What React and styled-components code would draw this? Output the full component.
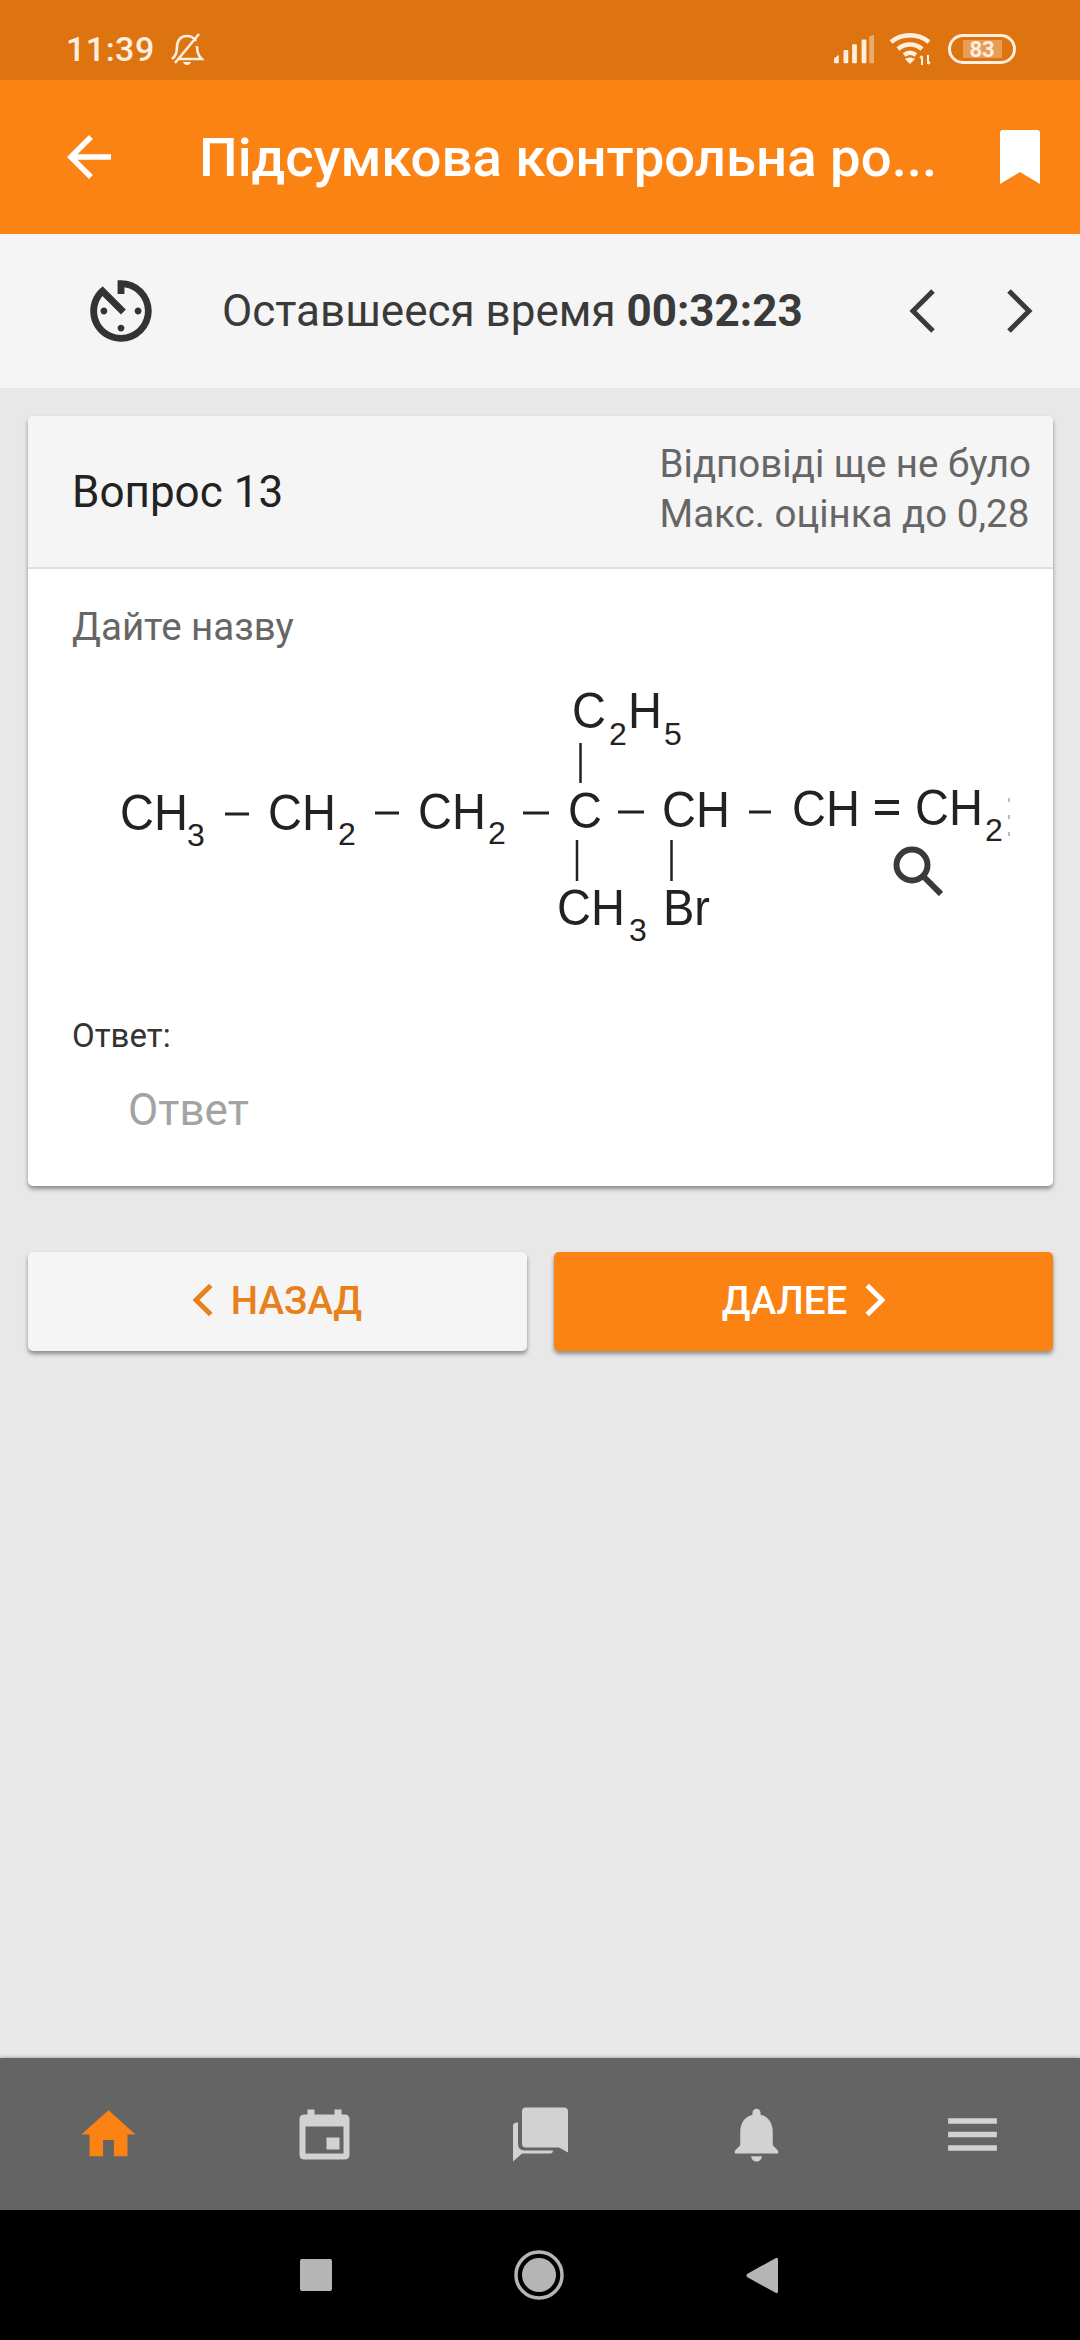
import styled, { createGlobalStyle } from "styled-components";
import { MdArrowBack, MdAvTimer, MdHome, MdNotifications, MdMenu } from "react-icons/md";

const GlobalStyle = createGlobalStyle`
    html, body {
        margin: 0;
        padding: 0;
        background: #e8e8e8;
    }
    * {
        box-sizing: border-box;
    }
`;

const Page = styled.div`
    width: 1080px;
    height: 2340px;
    display: flex;
    flex-direction: column;
    overflow: hidden;
    background: #e8e8e8;
    font-family: Roboto, "Noto Sans", sans-serif;
`;

const StatusBar = styled.div`
    height: 80px;
    flex: none;
    display: flex;
    align-items: center;
    justify-content: space-between;
    padding: 18px 64px 0 66px;
    background: #dd7410;
    color: #fdeee0;
`;

const StatusGroup = styled.div`
    display: flex;
    align-items: center;
    gap: ${props => props.$gap}px;
`;

const Clock = styled.span`
    font-size: 34px;
    font-weight: 500;
    letter-spacing: 0.5px;
`;

const Header = styled.header`
    height: 154px;
    flex: none;
    display: flex;
    align-items: center;
    background: #fb8314;
    color: #fff;
    padding: 0 40px 0 56px;
`;

const HeaderTitle = styled.h1`
    flex: 1;
    margin: 0 0 0 77px;
    font-size: 54.5px;
    font-weight: 500;
    white-space: nowrap;
`;

const TimerBar = styled.div`
    height: 154px;
    flex: none;
    display: flex;
    align-items: center;
    background: #f5f5f5;
    color: #3a3a3a;
    padding: 0 47px 0 80px;
`;

const TimerText = styled.div`
    flex: 1;
    margin-left: 60px;
    font-size: 44px;

    b {
        font-weight: 700;
    }
`;

const Pager = styled.div`
    display: flex;
    gap: 70px;
`;

const Content = styled.main`
    flex: 1;
    padding: 28px 27px 0 28px;
`;

const Card = styled.section`
    background: #fff;
    border-radius: 5px;
    box-shadow: 0 3px 4px rgba(0, 0, 0, 0.4);
    height: 770px;
`;

const CardHeader = styled.div`
    height: 153px;
    display: flex;
    align-items: center;
    justify-content: space-between;
    background: #f5f5f5;
    border-radius: 5px 5px 0 0;
    border-bottom: 2px solid #dedede;
    padding: 0 22px 0 44px;
`;

const QuestionTitle = styled.div`
    font-size: 44px;
    color: #222;
`;

const QuestionMeta = styled.div`
    margin-bottom: 6px;
    font-size: 38.5px;
    line-height: 50px;
    color: #666;
`;

const CardBody = styled.div`
    padding: 33px 44px 0;
`;

const Prompt = styled.div`
    font-size: 38.5px;
    line-height: 50px;
    color: #666;
`;

const Figure = styled.div`
    position: relative;
    width: 938px;
    height: 280px;
    margin-top: 26px;
`;

const FormulaSvg = styled.svg`
    display: block;
    font-family: "Liberation Sans", Arial, sans-serif;
    fill: #222;
`;

const ZoomIcon = styled.svg`
    position: absolute;
    left: 821px;
    top: 168px;
    color: #3a3a3a;
`;

const AnswerLabel = styled.div`
    margin-top: 58px;
    font-size: 33px;
    line-height: 40px;
    color: #333;
`;

const AnswerInput = styled.input`
    display: block;
    width: 100%;
    margin-top: 26px;
    padding: 0 0 0 56px;
    border: none;
    outline: none;
    background: transparent;
    font-family: inherit;
    font-size: 44px;
    line-height: 56px;

    &::placeholder {
        color: #a3a3a3;
        opacity: 1;
    }
`;

const Actions = styled.div`
    display: grid;
    grid-template-columns: 1fr 1fr;
    gap: 27px;
    margin-top: 66px;
`;

const ActionButton = styled.button`
    height: 99px;
    display: flex;
    align-items: center;
    justify-content: center;
    gap: 18px;
    border: none;
    border-radius: 5px;
    padding: 0 0 3px;
    background: ${props => props.$primary ? "#fb8314" : "#f5f5f5"};
    color: ${props => props.$primary ? "#fff" : "#e8801c"};
    box-shadow: 0 3px 4px rgba(0, 0, 0, 0.4);
    font-family: inherit;
    font-size: 38.5px;
    font-weight: 500;
`;

const BottomNav = styled.nav`
    height: 152px;
    flex: none;
    display: grid;
    grid-template-columns: repeat(5, 1fr);
    align-items: center;
    justify-items: center;
    background: #646464;
    box-shadow: 0 -1px 3px rgba(0, 0, 0, 0.25);
    color: #d2d2d2;
`;

const NavItem = styled.div`
    display: flex;
    color: ${props => props.$active ? "#fb8314" : "#d2d2d2"};
`;

const SystemBar = styled.div`
    height: 130px;
    flex: none;
    display: flex;
    align-items: center;
    justify-content: center;
    gap: 182px;
    background: #000;
    padding-right: 2px;
`;

const Chevron = ({ dir = "left", width = 27, height = 44, stroke = 5 }) => (
    <svg width={width} height={height} viewBox="0 0 27 44" fill="none" stroke="currentColor" strokeWidth={stroke * 27 / width} preserveAspectRatio="none">
        <path d={dir === "left" ? "M24 2 L4 22 L24 42" : "M3 2 L23 22 L3 42"} />
    </svg>
);

const BellOff = () => (
    <svg width="34" height="34" viewBox="0 0 34 34" fill="none" stroke="currentColor" strokeWidth="2.6">
        <path d="M2 27 C6 24 7 20 7 15 C7 8 11 4 17 4 C21 4 24 6 26 9" />
        <path d="M27 14 C27 20 28 24 32 27 H9" />
        <path d="M5 31 L29 2" />
        <path d="M13 30 H21 C20 34 14 34 13 30 Z" fill="currentColor" stroke="none" />
    </svg>
);

const Signal = () => (
    <svg width="40" height="30" viewBox="0 0 42 30" fill="currentColor">
        <path d="M0 25 L5 21 V30 H1 Q0 30 0 29 Z" />
        <rect x="10" y="16" width="5" height="14" rx="1" />
        <rect x="19" y="10" width="5" height="20" rx="1" />
        <rect x="29" y="5" width="5" height="25" rx="1" />
        <path d="M37 2 L42 0 V30 H37 Z" opacity="0.45" />
    </svg>
);

const Wifi = () => (
    <svg width="44" height="32" viewBox="0 0 44 32" fill="none" stroke="currentColor" strokeWidth="4.5">
        <path d="M2 9 C13 0 29 0 40 9" />
        <path d="M9 16 C16 10 26 10 33 16" />
        <path d="M15 22 C19 19 23 19 27 22" />
        <path d="M21 31 L16 26 C19 24 23 24 26 26 Z" fill="currentColor" stroke="none" />
        <path d="M33 32 V23 M33 23 L31 25 M39 22 V31 M39 31 L41 29" strokeWidth="2" />
    </svg>
);

const Battery = () => (
    <svg width="68" height="30" viewBox="0 0 68 30">
        <rect x="1.5" y="1.500" width="65" height="27" rx="13.5" fill="none" stroke="currentColor" strokeWidth="3" />
        <rect x="15" y="6" width="39" height="18" fill="currentColor" opacity="0.35" />
        <text x="34" y="23" textAnchor="middle" fontFamily="Roboto, sans-serif" fontSize="22" fontWeight="700" fill="currentColor">83</text>
    </svg>
);

const BookmarkIcon = () => (
    <svg width="40" height="54" viewBox="0 0 40 54" fill="currentColor">
        <path d="M3 0 H37 Q40 0 40 3 V54 L20 42 L0 54 V3 Q0 0 3 0 Z" />
    </svg>
);

const CalendarIcon = () => (
    <svg width="65" height="65" viewBox="-7.5 -7.5 65 65" fill="currentColor">
        <path fillRule="evenodd" d="M8 0 H15 V5 H35 V0 H42 V5 H45 Q50 5 50 10 V45 Q50 50 45 50 H5 Q0 50 0 45 V10 Q0 5 5 5 H8 Z M6 17 V44 H44 V17 Z" />
        <rect x="27" y="28" width="13" height="12" />
    </svg>
);

const ForumIcon = () => (
    <svg width="65" height="65" viewBox="-5 -5.500 65 65" fill="currentColor">
        <path d="M13 0 H51 Q55 0 55 4 V45 L46 40 H13 Q9 40 9 36 V4 Q9 0 13 0 Z" />
        <path d="M5 15 V36 Q5 43 12 43 H40 Q40 46 37 46 H9 L0 54 V18 Q0 15 5 15 Z" />
    </svg>
);

// the formula is a scanned picture in the app, the coordinates are page coordinates
const Chem = ({ x, y, children }) => (
    <text transform={`translate(${x} ${y}) scale(1 1.06)`} fontSize={47}>{children}</text>
);

const Sub = ({ x, y, children }) => (
    <text x={x} y={y} fontSize={32}>{children}</text>
);

const Bond = ({ x1, x2, y, width = 3 }) => (
    <line x1={x1} x2={x2} y1={y} y2={y} stroke="#222" strokeWidth={width} />
);

const VBond = ({ x, y1, y2 }) => (
    <line x1={x} x2={x} y1={y1} y2={y2} stroke="#222" strokeWidth="2.5" />
);

const Formula = () => (
    <FormulaSvg width="938" height="280" viewBox="72 680 938 280">
        <Chem x={572} y={730}>C</Chem>
        <Sub x={609} y={747}>2</Sub>
        <Chem x={628} y={730}>H</Chem>
        <Sub x={664} y={747}>5</Sub>
        <VBond x={580.5} y1={745} y2={785} />

        <Chem x={120} y={832}>CH</Chem>
        <Sub x={187} y={848}>3</Sub>
        <Bond x1={225} x2={249} y={816} />
        <Chem x={268} y={832}>CH</Chem>
        <Sub x={338} y={847}>2</Sub>
        <Bond x1={375} x2={399} y={815} />
        <Chem x={418} y={831}>CH</Chem>
        <Sub x={488} y={846}>2</Sub>
        <Bond x1={523} x2={549} y={815} />
        <Chem x={568} y={830}>C</Chem>
        <Bond x1={618} x2={644} y={814} />
        <Chem x={662} y={829}>CH</Chem>
        <Bond x1={749} x2={771} y={814} />
        <Chem x={792} y={828}>CH</Chem>
        <Bond x1={875} x2={899} y={804} width={4} />
        <Bond x1={875} x2={899} y={815} width={4} />
        <Chem x={915} y={827}>CH</Chem>
        <Sub x={985} y={843}>2</Sub>
        <line x1={1009} x2={1009} y1={800} y2={840} stroke="#bbb" strokeWidth="2" strokeDasharray="4 13" />

        <VBond x={577} y1={842} y2={883} />
        <VBond x={671.5} y1={842} y2={883} />
        <Chem x={557} y={927}>CH</Chem>
        <Sub x={629} y={943}>3</Sub>
        <Chem x={663} y={927}>Br</Chem>
    </FormulaSvg>
);

const App = () => {
    return (
        <Page>
            <GlobalStyle />
            <StatusBar>
                <StatusGroup $gap={15}>
                    <Clock>11:39</Clock>
                    <BellOff />
                </StatusGroup>
                <StatusGroup $gap={15}>
                    <Signal />
                    <Wifi />
                    <Battery />
                </StatusGroup>
            </StatusBar>
            <Header>
                <MdArrowBack size={66} />
                <HeaderTitle>Підсумкова контрольна ро...</HeaderTitle>
                <BookmarkIcon />
            </Header>
            <TimerBar>
                <MdAvTimer size={82} color="#333" />
                <TimerText>Оставшееся время <b>00:32:23</b></TimerText>
                <Pager>
                    <Chevron dir="left" />
                    <Chevron dir="right" />
                </Pager>
            </TimerBar>
            <Content>
                <Card>
                    <CardHeader>
                        <QuestionTitle>Вопрос 13</QuestionTitle>
                        <QuestionMeta>
                            Відповіді ще не було<br />
                            Макс. оцінка до 0,28
                        </QuestionMeta>
                    </CardHeader>
                    <CardBody>
                        <Prompt>Дайте назву</Prompt>
                        <Figure>
                            <Formula />
                            <ZoomIcon width="50" height="50" viewBox="0 0 50 50" fill="none" stroke="currentColor" strokeWidth="6">
                                <circle cx="19" cy="19" r="15.5" />
                                <line x1="30" y1="30" x2="48" y2="48" />
                            </ZoomIcon>
                        </Figure>
                        <AnswerLabel>Ответ:</AnswerLabel>
                        <AnswerInput placeholder="Ответ" />
                    </CardBody>
                </Card>
                <Actions>
                    <ActionButton>
                        <Chevron dir="left" width={20} height={32} stroke={5} />
                        НАЗАД
                    </ActionButton>
                    <ActionButton $primary>
                        ДАЛЕЕ
                        <Chevron dir="right" width={20} height={32} stroke={5} />
                    </ActionButton>
                </Actions>
            </Content>
            <BottomNav>
                <NavItem $active><MdHome size={65} /></NavItem>
                <NavItem><CalendarIcon /></NavItem>
                <NavItem><ForumIcon /></NavItem>
                <NavItem><MdNotifications size={65} /></NavItem>
                <NavItem><MdMenu size={65} /></NavItem>
            </BottomNav>
            <SystemBar>
                <svg width="32" height="32" viewBox="0 0 32 32" fill="#b5b5b5">
                    <rect width="32" height="32" rx="2" />
                </svg>
                <svg width="50" height="50" viewBox="0 0 50 50" fill="#b5b5b5">
                    <circle cx="25" cy="25" r="23" fill="none" stroke="#b5b5b5" strokeWidth="3.5" />
                    <circle cx="25" cy="25" r="17" />
                </svg>
                <svg width="32" height="37" viewBox="0 0 32 37" fill="#b5b5b5">
                    <path d="M30 1 Q32 0 32 3 V34 Q32 37 30 36 L1 20 Q0 18.500 1 17 Z" />
                </svg>
            </SystemBar>
        </Page>
    );
};

export default App;
